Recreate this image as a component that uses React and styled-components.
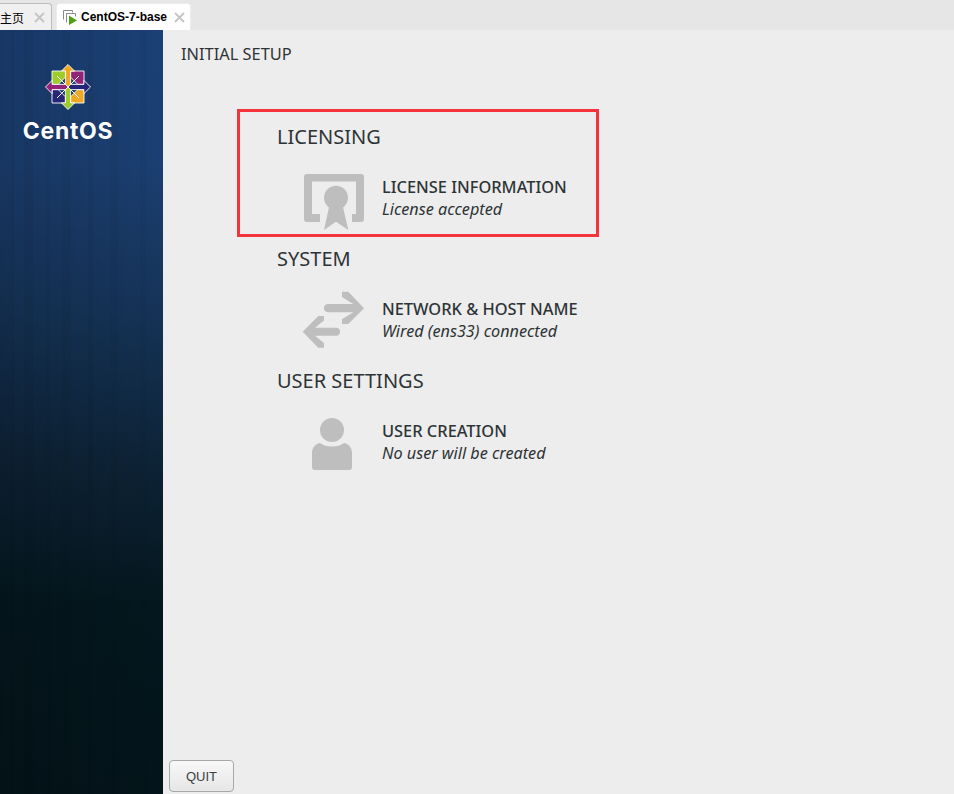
import React from 'react';
import styled, { createGlobalStyle } from 'styled-components';

const GlobalStyle = createGlobalStyle`
  html, body {
    margin: 0;
    padding: 0;
    height: 794px;
    overflow: hidden;
    background: #ededed;
  }
  #root {
    height: 794px;
  }
`;

const Page = styled.div`
  width: 954px;
  height: 794px;
  display: flex;
  flex-direction: column;
  position: relative;
  overflow: hidden;
  font-family: "Noto Sans", "Open Sans", sans-serif;
`;

const TabBar = styled.div`
  height: 30px;
  flex: none;
  display: flex;
  align-items: flex-end;
  gap: 4px;
  margin-left: -8px;
  background: #e6e6e6;
  font-family: "Noto Sans CJK SC", "Liberation Sans", sans-serif;
`;

const Tab = styled.div`
  height: 27px;
  width: ${props => (props.$active ? '135px' : '60px')};
  box-sizing: border-box;
  display: flex;
  align-items: center;
  justify-content: space-between;
  padding: ${props => (props.$active ? '0 5px 0 5px' : '0 6px 0 7px')};
  background: ${props => (props.$active ? '#ffffff' : '#f0f0f0')};
  border: 1px solid ${props => (props.$active ? '#ececec' : '#bdbdbd')};
  border-bottom: none;
  border-radius: 4px 4px 0 0;
`;

const TabLabel = styled.span`
  display: flex;
  align-items: center;
  gap: 3px;
  color: #000;
  font-size: 12px;
  font-weight: ${props => (props.$active ? 700 : 400)};
  font-family: ${props => (props.$active ? '"Liberation Sans", sans-serif' : 'inherit')};
  white-space: nowrap;
`;

const CloseMark = styled.svg`
  width: 11px;
  height: 11px;
  flex: none;
`;

const Body = styled.div`
  flex: 1;
  display: flex;
  min-height: 0;
`;

const Sidebar = styled.aside`
  width: 163px;
  flex: none;
  display: flex;
  flex-direction: column;
  align-items: center;
  padding: 34px 27px 0 0;
  box-sizing: border-box;
  background:
    linear-gradient(90deg,
      rgba(0, 0, 0, 0.02) 0 11px,
      rgba(0, 0, 0, 0.05) 11px 14px,
      rgba(0, 0, 0, 0) 14px 24px,
      rgba(0, 0, 0, 0.05) 24px 33px,
      rgba(0, 0, 0, 0) 33px 46px,
      rgba(0, 0, 0, 0.04) 46px 50px,
      rgba(0, 0, 0, 0) 50px 62px,
      rgba(0, 0, 0, 0.04) 62px 71px,
      rgba(0, 0, 0, 0) 71px 88px,
      rgba(0, 0, 0, 0.05) 88px 93px,
      rgba(0, 0, 0, 0) 93px 110px,
      rgba(0, 0, 0, 0.035) 110px 118px,
      rgba(0, 0, 0, 0) 118px 140px,
      rgba(0, 0, 0, 0.03) 140px 146px,
      rgba(0, 0, 0, 0) 146px),
    linear-gradient(90deg, rgba(0, 0, 0, 0.12), rgba(0, 0, 0, 0)),
    linear-gradient(180deg, #1b4075 0%, #1b3f72 17%, #153357 37%, #0d2337 56%, #04171e 75%, #03141a 100%);
`;

const LogoMark = styled.svg`
  width: 46px;
  height: 46px;
  flex: none;
`;

const LogoWord = styled.div`
  margin-top: 7px;
  color: #fff;
  font-family: "Inter", "Noto Sans", sans-serif;
  font-size: 23px;
  font-weight: 700;
  line-height: 28px;
  letter-spacing: 0.7px;
  white-space: nowrap;
`;

const Main = styled.main`
  flex: 1;
  min-width: 0;
  display: flex;
  flex-direction: column;
  background: #ededed;
`;

const PageTitle = styled.div`
  margin: 14px 0 0 18px;
  height: 20px;
  color: #2e3436;
  font-size: 16.4px;
  line-height: 20px;
`;

const Sections = styled.div`
  flex: 1;
  display: flex;
  flex-direction: column;
  padding: 59px 0 0 114px;
`;

const Section = styled.section`
  height: 122px;
  display: flex;
  flex-direction: column;
`;

const SectionTitle = styled.h2`
  margin: 0;
  height: 28px;
  color: #2e3436;
  font-size: 20px;
  font-weight: 400;
  line-height: 28px;
`;

const Spoke = styled.div`
  display: flex;
  align-items: flex-start;
  margin-top: 23px;
  padding-left: 27px;
`;

const SpokeIcon = styled.svg`
  width: 60px;
  height: 58px;
  flex: none;
  fill: #bebebe;
  overflow: visible;
`;

const SpokeText = styled.div`
  margin: 3px 0 0 18px;
  display: flex;
  flex-direction: column;
  gap: 2px;
`;

const SpokeName = styled.div`
  color: #2e3436;
  font-size: 16.4px;
  font-weight: 500;
  line-height: 20px;
  white-space: nowrap;
`;

const SpokeStatus = styled.div`
  color: #2e3436;
  font-size: 16.2px;
  font-style: italic;
  line-height: 20px;
  white-space: nowrap;
`;

const Footer = styled.div`
  flex: none;
  padding: 0 0 2px 6px;
`;

const QuitButton = styled.button`
  display: block;
  width: 65px;
  height: 32px;
  padding: 0;
  border: 1px solid #a8a8a8;
  border-radius: 4px;
  background: linear-gradient(180deg, #f8f8f8, #e6e6e6);
  color: #3a3f41;
  font-family: "Liberation Sans", sans-serif;
  font-size: 13px;
`;

// red box somebody drew over the screenshot
const Annotation = styled.div`
  position: absolute;
  left: 237px;
  top: 109px;
  width: 362px;
  height: 128px;
  box-sizing: border-box;
  border: 3px solid #f5333a;
  pointer-events: none;
`;

function Close() {
  return (
    <CloseMark viewBox="0 0 11 11">
      <path d="M1 1l9 9M10 1l-9 9" stroke="#c4c4c4" strokeWidth="1.8" />
    </CloseMark>
  );
}

function VmIcon() {
  return (
    <svg width="16" height="16" viewBox="0 0 16 16">
      <path d="M1.500 10.500V1.500h9v2" fill="none" stroke="#8a8a8a" />
      <path d="M4.500 13.500V4.500h9v3" fill="#fff" stroke="#8a8a8a" />
      <path d="M7 6.500l8 5-8 4.500z" fill="#4fa312" />
    </svg>
  );
}

function CentosLogo() {
  const arms = [
    { angle: 0, square: '#932279', arrow: '#efa724' },
    { angle: 90, square: '#efa724', arrow: '#262577' },
    { angle: 180, square: '#262577', arrow: '#9ccd2a' },
    { angle: 270, square: '#9ccd2a', arrow: '#932279' },
  ];
  return (
    <LogoMark viewBox="-23 -23 46 46">
      {arms.map(arm => (
        <g key={arm.angle} transform={`rotate(${arm.angle})`}>
          <path d="M2.600 -16 H16 V-2.600 H9.800 L2.600 -9.800 Z" fill={arm.square} stroke="#fff" strokeWidth="0.9" />
          <path d="M0 -22.500 L6.600 -15.900 H2.600 V-2.600 L0 0 L-2.600 -2.600 V-15.900 H-6.600 Z" fill={arm.arrow} stroke="#fff" strokeWidth="0.9" />
          <path d="M2.600 -2.600 L11 -11" stroke="#fff" strokeWidth="1" />
        </g>
      ))}
    </LogoMark>
  );
}

function LicenseIcon() {
  return (
    <SpokeIcon viewBox="0 0 60 58">
      <path d="M3 0h54a3 3 0 0 1 3 3v42a3 3 0 0 1-3 3H48v-8h4V7.500H8V40h8v8H3a3 3 0 0 1-3-3V3a3 3 0 0 1 3-3z" />
      <circle cx="32" cy="23.700" r="12" />
      <path d="M25 33h14l5.300 23L32 47.700 20 56z" />
    </SpokeIcon>
  );
}

function NetworkIcon() {
  return (
    <SpokeIcon viewBox="0 0 60 58">
      <path d="M38 -4.300h6.300L60 12.300 44.300 28H38v-4.700L49.300 16.300H24a4.150 4.150 0 0 1 0-8.300h25.300L38 1z" />
      <path d="M20 20h-5.700L-1.300 35.700 14.300 51.700H20V47l-9-7.300h21a4 4 0 0 0 0-8H11l9-7.200z" />
    </SpokeIcon>
  );
}

function UserIcon() {
  return (
    <SpokeIcon viewBox="0 0 60 58">
      <circle cx="28" cy="12" r="12" />
      <path d="M16 25c3 2.500 7 3.500 12 3.500s9-1 12-3.500c5 1 8 5 8 10v14a3 3 0 0 1-3 3H11a3 3 0 0 1-3-3V35c0-5 3-9 8-10z" />
    </SpokeIcon>
  );
}

const spokes = [
  { title: 'LICENSING', name: 'LICENSE INFORMATION', status: 'License accepted', Icon: LicenseIcon },
  { title: 'SYSTEM', name: 'NETWORK & HOST NAME', status: 'Wired (ens33) connected', Icon: NetworkIcon },
  { title: 'USER SETTINGS', name: 'USER CREATION', status: 'No user will be created', Icon: UserIcon },
];

function App() {
  return (
    <Page>
      <GlobalStyle />
      <TabBar>
        <Tab>
          <TabLabel>主页</TabLabel>
          <Close />
        </Tab>
        <Tab $active>
          <TabLabel $active><VmIcon />CentOS-7-base</TabLabel>
          <Close />
        </Tab>
      </TabBar>
      <Body>
        <Sidebar>
          <CentosLogo />
          <LogoWord>CentOS</LogoWord>
        </Sidebar>
        <Main>
          <PageTitle>INITIAL SETUP</PageTitle>
          <Sections>
            {spokes.map(({ title, name, status, Icon }) => (
              <Section key={title}>
                <SectionTitle>{title}</SectionTitle>
                <Spoke>
                  <Icon />
                  <SpokeText>
                    <SpokeName>{name}</SpokeName>
                    <SpokeStatus>{status}</SpokeStatus>
                  </SpokeText>
                </Spoke>
              </Section>
            ))}
          </Sections>
          <Footer>
            <QuitButton>QUIT</QuitButton>
          </Footer>
        </Main>
      </Body>
      <Annotation />
    </Page>
  );
}

export default App;
